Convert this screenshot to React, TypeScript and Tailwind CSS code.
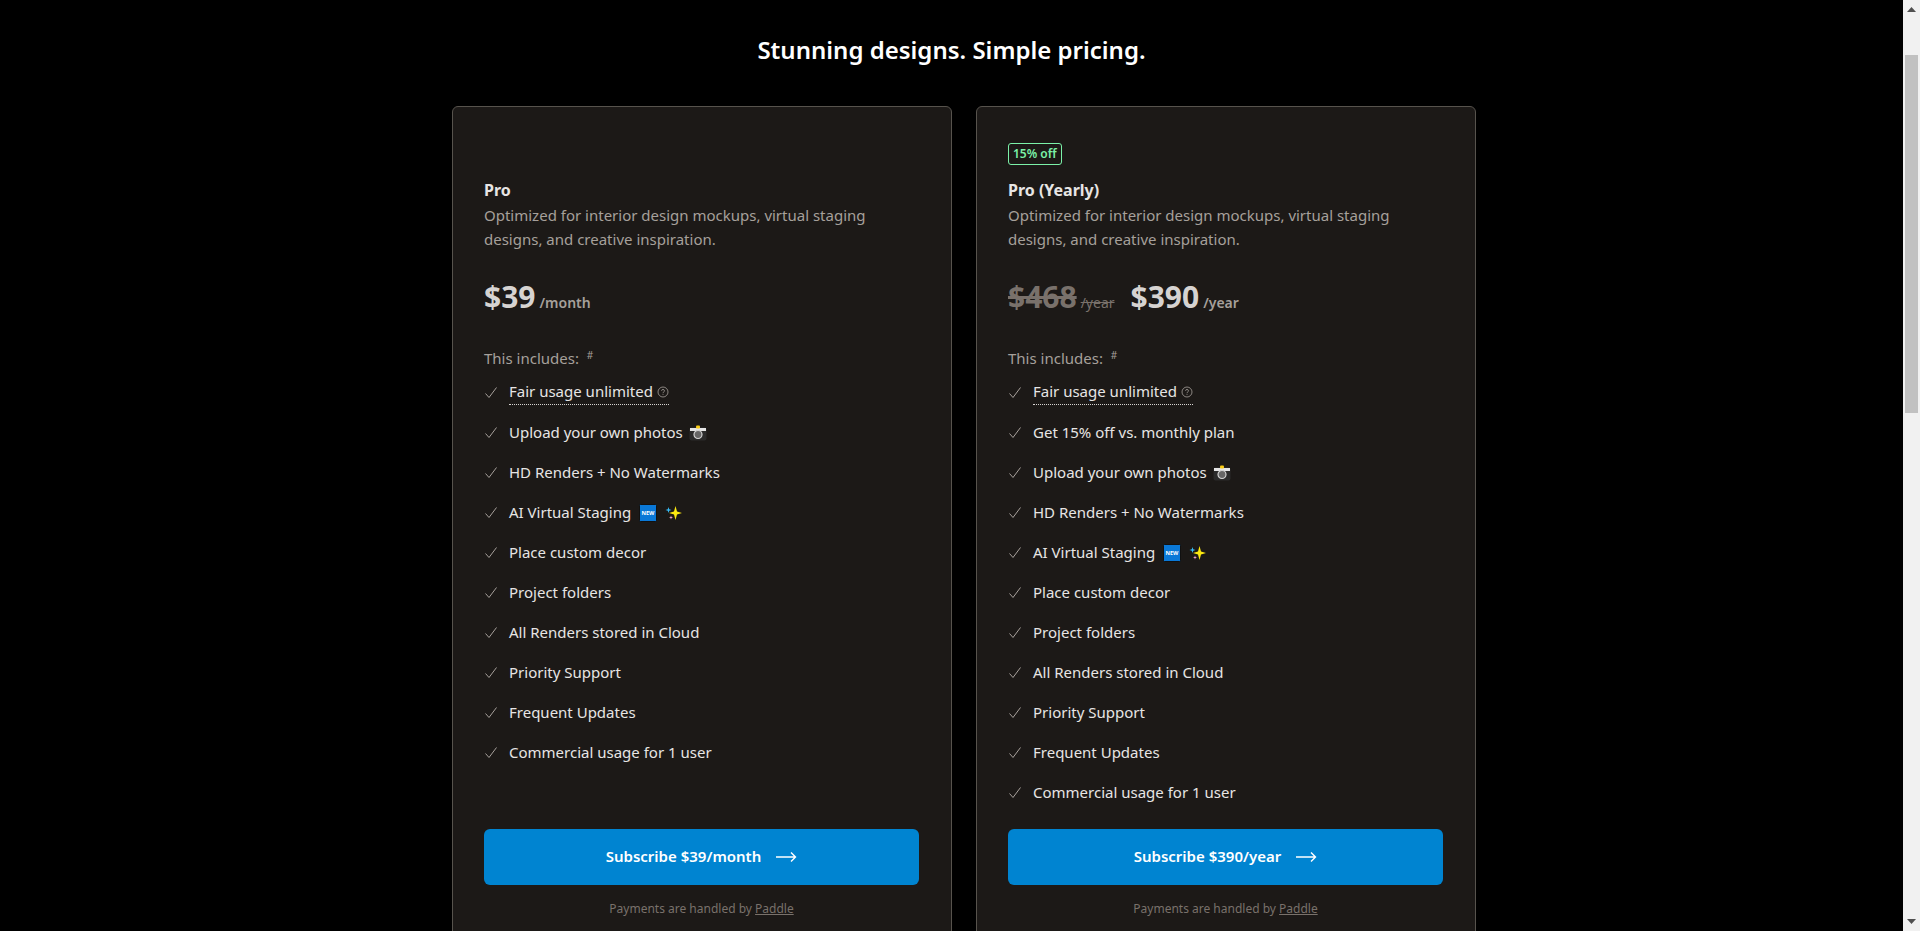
import React from "react";

const font = "[font-family:'Noto_Sans',sans-serif]";

function Check() {
  return (
    <svg width="14" height="14" viewBox="0 0 14 14" fill="none" className="shrink-0 text-stone-400">
      <path d="M1.5 7.5 L5 11.5 L12.5 1.5" stroke="currentColor" strokeWidth="1" />
    </svg>
  );
}

function Help() {
  return (
    <svg width="12" height="12" viewBox="0 0 12 12" fill="none" className="text-stone-400">
      <circle cx="6" cy="6" r="5" stroke="currentColor" strokeWidth="0.8" />
      <path d="M4.5 4.8 C4.5 3 7.5 3 7.5 4.8 C7.5 6 6 5.8 6 7.2 M6 8.2 V9" stroke="currentColor" strokeWidth="0.8" />
    </svg>
  );
}

function Camera() {
  return (
    <svg width="18" height="16" viewBox="0 0 18 16" className="ml-1.5">
      <rect x="0.5" y="2.5" width="17" height="13" rx="2" fill="#2b2b2b" />
      <rect x="1" y="3" width="16" height="3" fill="#e5e5e5" />
      <circle cx="9" cy="9.5" r="4" fill="#666" stroke="#d4d4d4" strokeWidth="1.2" />
      <rect x="7" y="0.5" width="4" height="3" rx="1" fill="#facc15" />
    </svg>
  );
}

function NewBadge() {
  return (
    <svg width="18" height="18" viewBox="0 0 18 18" className="ml-2">
      <rect x="0.5" y="0.5" width="17" height="17" rx="1" fill="#0a78d7" stroke="#111" />
      <text x="9" y="11" textAnchor="middle" fontSize="5.5" fontWeight="700" fill="#fff" fontFamily="Noto Sans">NEW</text>
    </svg>
  );
}

function Sparkles() {
  return (
    <svg width="18" height="18" viewBox="0 0 18 18" className="ml-2">
      <path d="M10.5 2 L12 7.5 L17 9 L12 10.5 L10.5 16 L9 10.5 L4 9 L9 7.5 Z" fill="#fde910" />
      <path d="M3.5 3 L4.2 5.3 L6.5 6 L4.2 6.7 L3.5 9 L2.8 6.7 L0.5 6 L2.8 5.3 Z" fill="#38bdf8" />
      <path d="M6 11.5 L6.5 13 L8 13.5 L6.5 14 L6 15.5 L5.5 14 L4 13.5 L5.5 13 Z" fill="#f9a8d4" />
    </svg>
  );
}

function Arrow() {
  return (
    <svg width="22" height="12" viewBox="0 0 22 12" fill="none" className="ml-3.5">
      <path d="M1 6 H20.5 M16 1.5 L20.5 6 L16 10.5" stroke="#fff" strokeWidth="1.4" />
    </svg>
  );
}

function Row({ children }: { children: React.ReactNode }) {
  return (
    <li className="flex h-10 items-center">
      <Check />
      <span className="ml-[11px] flex items-center">{children}</span>
    </li>
  );
}

function Features({ yearly }: { yearly?: boolean }) {
  return (
    <ul className="mt-[3px] text-[15px] text-stone-200">
      <li className="flex h-10 items-center">
        <Check />
        <span className="ml-[11px] flex items-center gap-1 border-b border-dotted border-stone-300 pb-px">
          Fair usage unlimited <Help />
        </span>
      </li>
      {yearly && <Row>Get 15% off vs. monthly plan</Row>}
      <Row>Upload your own photos <Camera /></Row>
      <Row>HD Renders + No Watermarks</Row>
      <Row>AI Virtual Staging <NewBadge /><Sparkles /></Row>
      <Row>Place custom decor</Row>
      <Row>Project folders</Row>
      <Row>All Renders stored in Cloud</Row>
      <Row>Priority Support</Row>
      <Row>Frequent Updates</Row>
      <Row>Commercial usage for 1 user</Row>
    </ul>
  );
}

function Card({ yearly }: { yearly?: boolean }) {
  return (
    <div className="flex h-[900px] w-[500px] flex-col rounded-md border border-stone-600 bg-stone-900 pl-[31px] pr-8 pt-[33px]">
      <div className="h-[22px]">
        {yearly && (
          <span className="inline-flex h-[22px] items-center rounded-[3px] border border-green-300 px-1 text-xs font-semibold text-green-300">
            15% off
          </span>
        )}
      </div>
      <h2 className={`text-base font-bold text-stone-200 ${yearly ? "mt-4" : "mt-[16px]"}`}>
        {yearly ? "Pro (Yearly)" : "Pro"}
      </h2>
      <p className="mt-px w-[400px] text-[15px] leading-6 text-stone-400">
        Optimized for interior design mockups, virtual staging designs, and creative inspiration.
      </p>
      <div className="mt-[22px] flex h-12 items-center">
        {yearly && (
          <div className="mr-4 flex items-baseline text-stone-500">
            <span className="text-3xl font-bold line-through">$468</span>
            <span className="ml-1 text-sm line-through">/year</span>
          </div>
        )}
        <div className="flex items-baseline">
          <span className="text-3xl font-bold text-stone-300">{yearly ? "$390" : "$39"}</span>
          <span className="ml-1 text-sm font-semibold text-stone-400">{yearly ? "/year" : "/month"}</span>
        </div>
      </div>
      <div className="mt-[26px] text-[15px] text-stone-400">
        This includes: <sup className="ml-1 text-[10px]">#</sup>
      </div>
      <Features yearly={yearly} />
      <div className={`${yearly ? "mt-[16px]" : "mt-[56px]"} flex h-14 w-[435px] items-center justify-center rounded-md bg-sky-600 text-[15px] font-semibold text-white`}>
        {yearly ? "Subscribe $390/year" : "Subscribe $39/month"}
        <Arrow />
      </div>
      <div className="mt-4 w-[435px] text-center text-xs text-stone-500">
        Payments are handled by <span className="underline">Paddle</span>
      </div>
    </div>
  );
}

function Scrollbar() {
  return (
    <div className="flex h-full w-[17px] shrink-0 flex-col items-center bg-[#f1f1f1]">
      <svg width="9" height="5" viewBox="0 0 9 5" className="mt-[7px] shrink-0">
        <path d="M4.5 0 L9 5 H0 Z" fill="#505050" />
      </svg>
      <div className="mt-[43px] h-[358px] w-[13px] shrink-0 bg-[#c1c1c1]" />
      <svg width="9" height="5" viewBox="0 0 9 5" className="mb-[7px] mt-auto shrink-0">
        <path d="M0 0 H9 L4.5 5 Z" fill="#505050" />
      </svg>
    </div>
  );
}

export default function App() {
  return (
    <div className={`flex h-screen overflow-hidden bg-black ${font}`}>
      <main className="min-w-0 flex-1 overflow-hidden">
        <h1 className="mt-[34px] text-center text-2xl font-semibold leading-8 text-white">
          Stunning designs. Simple pricing.
        </h1>
        <div className="ml-[452px] mt-[40px] flex gap-6">
          <Card />
          <Card yearly />
        </div>
      </main>
      <Scrollbar />
    </div>
  );
}
